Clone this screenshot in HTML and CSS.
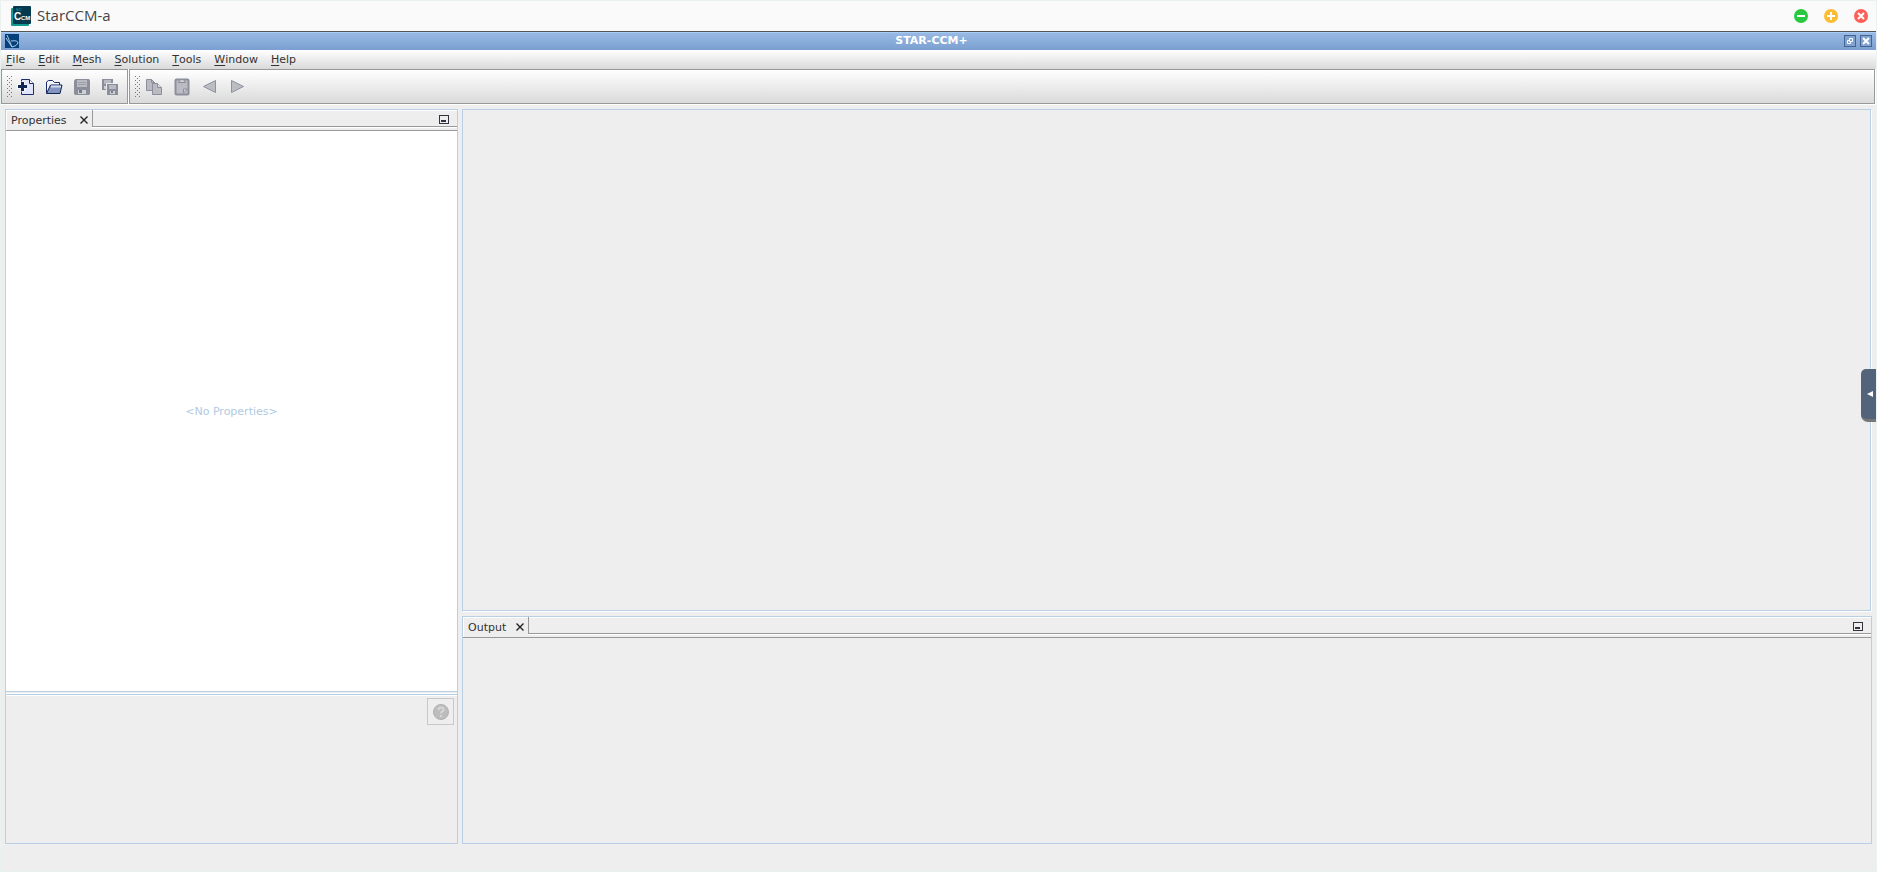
FILE: index.html
```html
<!DOCTYPE html>
<html lang="en">
<head>
    <meta charset="UTF-8">
    <meta name="viewport" content="width=device-width, initial-scale=1.0">
    <title>StarCCM-a</title>
    <link rel="stylesheet" href="styles.css">
</head>
<body>
    <header class="titlebar">
        <svg class="app-logo" width="20" height="20" viewBox="0 0 20 20">
            <rect x="0" y="2" width="18" height="18" rx="1" fill="#0f9c93"/>
            <rect x="2" y="0" width="18" height="18" rx="1" fill="#063b4f"/>
            <text x="5" y="5" class="logo-small">SC</text>
            <text x="3" y="14" class="logo-big">C</text>
            <text x="10" y="14" class="logo-mid">CM</text>
        </svg>
        <h1>StarCCM-a</h1>
        <div class="window-buttons">
            <button type="button" aria-label="Minimize">
                <svg width="14" height="14" viewBox="0 0 14 14"><circle cx="7" cy="7" r="7" fill="#28c840"/><path d="M3 7h8" stroke="#fff" stroke-width="2"/></svg>
            </button>
            <button type="button" aria-label="Maximize">
                <svg width="14" height="14" viewBox="0 0 14 14"><circle cx="7" cy="7" r="7" fill="#febc2e"/><path d="M3 7h8M7 3v8" stroke="#fff" stroke-width="2"/></svg>
            </button>
            <button type="button" aria-label="Close">
                <svg width="14" height="14" viewBox="0 0 14 14"><circle cx="7" cy="7" r="7" fill="#ff5f57"/><path d="M4 4l6 6M10 4l-6 6" stroke="#fff" stroke-width="2"/></svg>
            </button>
        </div>
    </header>

    <div class="frame">
        <div class="frame-title">
            <svg class="frame-logo" width="14" height="14" viewBox="0 0 14 14">
                <rect width="14" height="14" fill="#06407a"/>
                <path d="M2 1l5 12M6 7q7-1 7 2q-1 3-6 4M1 4l6 9" fill="none" stroke="#a9c8e4"/>
            </svg>
            <h2>STAR-CCM+</h2>
            <div class="frame-buttons">
                <button type="button" aria-label="Restore">
                    <svg width="12" height="12" viewBox="0 0 12 12"><rect x=".5" y=".5" width="11" height="11" fill="#7fa2d2" stroke="#44658f"/><path d="M5.5 6.500v-3h3v3zM5.500 5.500h-2v3h3v-2" fill="none" stroke="#fff"/></svg>
                </button>
                <button type="button" aria-label="Close frame">
                    <svg width="12" height="12" viewBox="0 0 12 12"><rect x=".5" y=".5" width="11" height="11" fill="#7fa2d2" stroke="#44658f"/><path d="M3 3l6 6M9 3l-6 6" stroke="#fff" stroke-width="2"/></svg>
                </button>
            </div>
        </div>

        <nav class="menu">
            <button type="button"><u>F</u>ile</button>
            <button type="button"><u>E</u>dit</button>
            <button type="button"><u>M</u>esh</button>
            <button type="button"><u>S</u>olution</button>
            <button type="button"><u>T</u>ools</button>
            <button type="button"><u>W</u>indow</button>
            <button type="button"><u>H</u>elp</button>
        </nav>

        <div class="toolbars">
            <div class="toolbar">
                <span class="grip"></span>
                <button type="button" aria-label="New">
                    <svg width="18" height="18" viewBox="0 0 18 18"><path d="M4.500 1.500h8l4 4v11h-12z" fill="#e2e4fa" stroke="#1c2f6b"/><path d="M12.500 1.500v4h4" fill="#fff" stroke="#1c2f6b"/><path d="M0 8.500h10M5.500 3.500v10" stroke="#fff" stroke-width="4"/><path d="M1 8.500h9M5.500 4v9" stroke="#102456" stroke-width="3"/></svg>
                </button>
                <button type="button" aria-label="Open">
                    <svg width="18" height="18" viewBox="0 0 18 18"><path d="M1.500 15V4l2-1.500h4l2 2h5V7" fill="#f4f7fd" stroke="#1c2f6b"/><path d="M1.500 15.500l4-8.500h11.500l-2 8.500z" fill="#8394bf" stroke="#102456"/><path d="M6 8.500h10" stroke="#d3dcef" stroke-width="2"/></svg>
                </button>
                <button type="button" aria-label="Save" disabled>
                    <svg width="18" height="18" viewBox="0 0 18 18"><path d="M1 2.500L2.500 1H16l1 1.500V16l-1 1H2.500L1 16z" fill="#8a8f9b"/><path d="M4 2h10v7H4z" fill="#b9bac2"/><path d="M5 4.500h8M5 6.500h8" stroke="#9da0ab"/><path d="M5 12h8v4H5z" fill="#d0d1d5"/><path d="M6 12h3v3H6z" fill="#747a87"/></svg>
                </button>
                <button type="button" aria-label="Save all" disabled>
                    <svg width="18" height="18" viewBox="0 0 18 18"><path d="M1 1h11v11H1z" fill="#8a8f9b"/><path d="M3 2h7v4H3z" fill="#b9bac2"/><path d="M3 8h4v3H3z" fill="#d0d1d5"/><path d="M5.500 17V5.500H12" stroke="#e8e8e8" fill="none"/><path d="M6 6h11v11H6z" fill="#8a8f9b"/><path d="M8 7h7v4H8z" fill="#b9bac2"/><path d="M9 13h5v3H9z" fill="#d0d1d5"/><path d="M10 13h2v2h-2z" fill="#747a87"/></svg>
                </button>
            </div>
            <div class="toolbar toolbar-wide">
                <span class="grip"></span>
                <button type="button" aria-label="Copy" disabled>
                    <svg width="18" height="18" viewBox="0 0 18 18"><path d="M1.500 1.500h5l3 3v8h-8z" fill="#babbc2" stroke="#8a8f9b"/><path d="M6.500 1.500v3h3" fill="none" stroke="#8a8f9b"/><path d="M7.500 5.500h5l4 4v7h-9z" fill="#babbc2" stroke="#8a8f9b"/><path d="M12.500 5.500v4h4" fill="#ddd" stroke="#8a8f9b"/></svg>
                </button>
                <button type="button" aria-label="Paste" disabled>
                    <svg width="18" height="18" viewBox="0 0 18 18"><rect x="2.500" y="1.500" width="13" height="15" rx="1" fill="#bbbcc3" stroke="#8a8f9b" stroke-width="2"/><path d="M5.500 4.500l2-3h3l2 3z" fill="#ccc" stroke="#8a8f9b"/><path d="M10.500 15v-4h4z" fill="#d4d5d9" stroke="#8a8f9b"/></svg>
                </button>
                <button type="button" aria-label="Back" disabled>
                    <svg width="18" height="18" viewBox="0 0 18 18"><path d="M14.500 2.500v12L2.500 8.500z" fill="#bcbdc2" stroke="#8b93a1"/></svg>
                </button>
                <button type="button" aria-label="Forward" disabled>
                    <svg width="18" height="18" viewBox="0 0 18 18"><path d="M2.500 2.500v12l12-6z" fill="#bcbdc2" stroke="#8b93a1"/></svg>
                </button>
            </div>
        </div>

        <main class="workspace">
            <section class="panel properties">
                <div class="tabs">
                    <div class="tab">
                        <span>Properties</span>
                        <button type="button" aria-label="Close Properties">
                            <svg width="8" height="8" viewBox="0 0 8 8"><path d="M.5 .5l7 7M7.500 .5l-7 7" stroke="#222" stroke-width="1.400"/></svg>
                        </button>
                    </div>
                    <div class="tab-rest">
                        <button type="button" aria-label="Minimize Properties">
                            <svg width="10" height="9" viewBox="0 0 10 9"><rect x=".5" y=".5" width="9" height="8" fill="#eee" stroke="#33333f"/><path d="M2 6h5" stroke="#33333f" stroke-width="2"/></svg>
                        </button>
                    </div>
                </div>
                <div class="property-list">&lt;No Properties&gt;</div>
                <div class="description">
                    <button type="button" class="help" aria-label="Help" disabled>
                        <svg width="16" height="16" viewBox="0 0 16 16"><circle cx="8" cy="8" r="7.500" fill="#bdbdbd" stroke="#b0b0b0"/><path d="M5.500 6q0-2.500 2.500-2.500t2.500 2.200q0 1.300-1.500 2Q8 8.200 8 9.500M8 11v2" fill="none" stroke="#d6d6d6" stroke-width="2"/></svg>
                    </button>
                </div>
            </section>

            <div class="right">
                <section class="panel editor"></section>
                <section class="panel output">
                    <div class="tabs">
                        <div class="tab">
                            <span>Output</span>
                            <button type="button" aria-label="Close Output">
                                <svg width="8" height="8" viewBox="0 0 8 8"><path d="M.5 .5l7 7M7.500 .5l-7 7" stroke="#222" stroke-width="1.400"/></svg>
                            </button>
                        </div>
                        <div class="tab-rest">
                            <button type="button" aria-label="Minimize Output">
                                <svg width="10" height="9" viewBox="0 0 10 9"><rect x=".5" y=".5" width="9" height="8" fill="#eee" stroke="#33333f"/><path d="M2 6h5" stroke="#33333f" stroke-width="2"/></svg>
                            </button>
                        </div>
                    </div>
                </section>
            </div>
        </main>
    </div>

    <button type="button" class="side-handle" aria-label="Open side bar">
        <svg width="6" height="6" viewBox="0 0 6 6"><path d="M6 0v6L0 3z" fill="#fff"/></svg>
    </button>
</body>
</html>
```

FILE: styles.css
```css
* {
    box-sizing: border-box;
}

body {
    display: flex;
    flex-direction: column;
    min-height: 100vh;
    margin: 0;
    border: 1px solid #eaf1f1;
    background-color: #eee;
    color: #333;
    font-family: "DejaVu Sans", Verdana, sans-serif;
    font-size: 11px;
}

button {
    display: flex;
    align-items: center;
    justify-content: center;
    padding: 0;
    border: none;
    background: none;
    color: inherit;
    font: inherit;
}

svg {
    display: block;
}

h1, h2 {
    margin: 0;
}

/* Outer window */
.titlebar {
    display: flex;
    align-items: center;
    height: 30px;
    padding: 0 8px 0 10px;
    background-color: #fafafa;
}

.titlebar h1 {
    margin-left: 6px;
    padding-bottom: 2px;
    color: #444;
    font-family: "Open Sans", sans-serif;
    font-size: 15px;
    font-weight: normal;
    line-height: 20px;
}

.logo-small, .logo-big, .logo-mid {
    fill: #fff;
    font-family: "Liberation Sans", Arial, sans-serif;
    font-weight: bold;
}

.logo-small {
    fill: #148c93;
    font-size: 4px;
}

.logo-big {
    font-size: 10px;
}

.logo-mid {
    font-size: 6px;
}

.window-buttons {
    display: flex;
    gap: 16px;
    margin-left: auto;
}

/* Inner frame */
.frame {
    display: flex;
    flex: 1;
    flex-direction: column;
}

.frame-title {
    display: flex;
    align-items: center;
    height: 19px;
    padding: 0 4px;
    border-top: 1px solid #555;
    background: linear-gradient(#a6cdf5 1px, #99b9e3 1px, #7a9fd0);
    color: #fff;
}

.frame-title h2 {
    flex: 1;
    font-size: 11px;
    line-height: 14px;
    text-align: center;
}

.frame-buttons {
    display: flex;
    gap: 4px;
}

.menu {
    display: flex;
    height: 19px;
    background: linear-gradient(#fff, #dadada);
}

.menu button {
    padding: 0 8px 0 5px;
}

.menu u {
    text-underline-offset: 2px;
}

.toolbars {
    display: flex;
    gap: 1px;
    padding-right: 1px;
    border-bottom: 1px solid #fff;
    background-color: #fff;
}

.toolbar {
    display: flex;
    height: 35px;
    padding: 0 3px 0 5px;
    border: 1px solid #999;
    background: linear-gradient(#fff, #dadada);
}

.toolbar-wide {
    flex: 1;
}

.toolbar button {
    width: 28px;
}

.grip {
    align-self: center;
    width: 5px;
    height: 22px;
    background-image:
        conic-gradient(from 270deg at 1px 1px, #777 90deg, transparent 0),
        conic-gradient(from 270deg at 1px 1px, #777 90deg, transparent 0);
    background-position: 0 0, 2px 2px;
    background-size: 4px 4px;
}

/* Docked panels */
.workspace {
    display: flex;
    flex: 1;
    gap: 4px;
    padding: 4px 4px 27px;
}

.panel {
    display: flex;
    flex-direction: column;
    border: 1px solid #b8cfe5;
}

.properties {
    width: 453px;
}

.right {
    display: flex;
    flex: 1;
    flex-direction: column;
    gap: 5px;
}

.editor {
    flex: 1;
    margin-right: 1px;
    box-shadow: 1px 1px #fff;
}

.output {
    height: 228px;
}

.tabs {
    display: flex;
    height: 21px;
    padding-left: 1px;
    border-bottom: 1px solid #999;
    box-shadow: inset 1px 1px #fff;
}

.tab {
    display: flex;
    align-items: center;
    gap: 10px;
    padding: 0 4px;
}

.properties .tab {
    gap: 13px;
}

.tab-rest {
    display: flex;
    align-items: flex-end;
    flex: 1;
    justify-content: flex-end;
    height: 17px;
    padding: 0 8px 2px 0;
    border-bottom: 1px solid #999;
    border-left: 1px solid #999;
    box-shadow: 0 1px #fff;
}

.property-list {
    display: flex;
    flex: 1;
    align-items: center;
    justify-content: center;
    border-bottom: 1px solid #b8cfe5;
    background-color: #fff;
    color: #b0cae2;
}

.description {
    display: flex;
    align-items: flex-start;
    justify-content: flex-end;
    height: 149px;
    margin-top: 2px;
    padding: 3px;
    border-top: 1px solid #b8cfe5;
    box-shadow: inset 0 1px #fff, 0 -1px #fff;
}

.help {
    width: 27px;
    height: 27px;
    border: 1px solid #c8c8c8;
}

/* Pull-out handle on the right edge */
.side-handle {
    position: fixed;
    top: 369px;
    right: 1px;
    width: 15px;
    height: 53px;
    padding-left: 2px;
    border-bottom: 3px solid #77777a;
    border-radius: 5px 0 0 7px;
    background-color: #53647a;
}
```
